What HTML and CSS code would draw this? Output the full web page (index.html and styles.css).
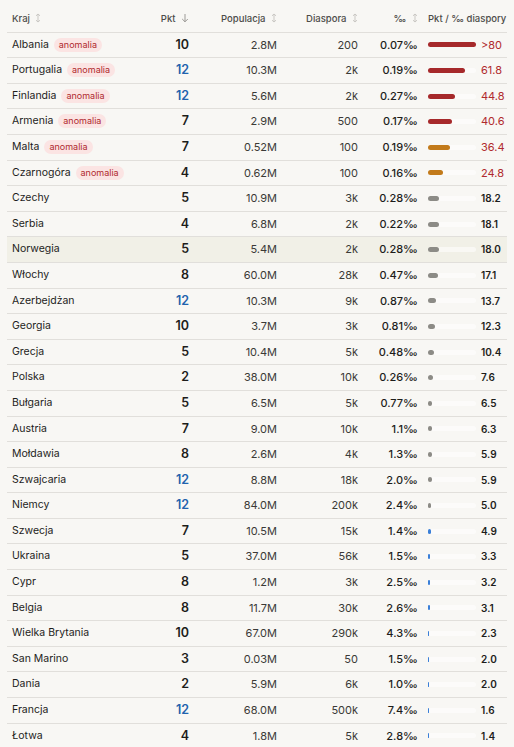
FILE: index.html
```html
<html lang="pl">
<head>
  <meta charset="UTF-8">
  <meta name="viewport" content="width=device-width, initial-scale=1.0">
  <title>Diaspora a punkty</title>
  <link rel="stylesheet" href="styles.css">
</head>
<body>
  <table class="stats">
    <colgroup>
      <col class="c-name">
      <col class="c-pkt">
      <col class="c-pop">
      <col class="c-dia">
      <col class="c-pm">
      <col class="c-ratio">
    </colgroup>
    <thead>
      <tr>
        <th class="left">Kraj <svg class="sort" viewBox="0 0 6 10"><path d="M3 1v8M1 2.8 3 1l2 1.8M1 7.2 3 9l2-1.8"/></svg></th>
        <th>Pkt <svg class="sort active" viewBox="0 0 8 10"><path d="M4 1v8M1.2 6 4 8.8 6.8 6"/></svg></th>
        <th>Populacja <svg class="sort" viewBox="0 0 6 10"><path d="M3 1v8M1 2.8 3 1l2 1.8M1 7.2 3 9l2-1.8"/></svg></th>
        <th>Diaspora <svg class="sort" viewBox="0 0 6 10"><path d="M3 1v8M1 2.8 3 1l2 1.8M1 7.2 3 9l2-1.8"/></svg></th>
        <th>‰ <svg class="sort" viewBox="0 0 6 10"><path d="M3 1v8M1 2.8 3 1l2 1.8M1 7.2 3 9l2-1.8"/></svg></th>
        <th class="left">Pkt / ‰ diaspory <svg class="sort" viewBox="0 0 6 10"><path d="M3 1v8M1 2.8 3 1l2 1.8M1 7.2 3 9l2-1.8"/></svg></th>
      </tr>
    </thead>
    <tbody id="rows"></tbody>
  </table>
  <script>
    // kraj, pkt, populacja, diaspora, promile, pkt/promile, kolor paska
    const data = [
      ['Albania', 10, '2.8M', '200', '0.07‰', 80, 'red', '>80'],
      ['Portugalia', 12, '10.3M', '2k', '0.19‰', 61.8, 'red'],
      ['Finlandia', 12, '5.6M', '2k', '0.27‰', 44.8, 'red'],
      ['Armenia', 7, '2.9M', '500', '0.17‰', 40.6, 'red'],
      ['Malta', 7, '0.52M', '100', '0.19‰', 36.4, 'orange'],
      ['Czarnogóra', 4, '0.62M', '100', '0.16‰', 24.8, 'orange'],
      ['Czechy', 5, '10.9M', '3k', '0.28‰', 18.2, 'grey'],
      ['Serbia', 4, '6.8M', '2k', '0.22‰', 18.1, 'grey'],
      ['Norwegia', 5, '5.4M', '2k', '0.28‰', 18.0, 'grey'],
      ['Włochy', 8, '60.0M', '28k', '0.47‰', 17.1, 'grey'],
      ['Azerbejdżan', 12, '10.3M', '9k', '0.87‰', 13.7, 'grey'],
      ['Georgia', 10, '3.7M', '3k', '0.81‰', 12.3, 'grey'],
      ['Grecja', 5, '10.4M', '5k', '0.48‰', 10.4, 'grey'],
      ['Polska', 2, '38.0M', '10k', '0.26‰', 7.6, 'grey'],
      ['Bułgaria', 5, '6.5M', '5k', '0.77‰', 6.5, 'grey'],
      ['Austria', 7, '9.0M', '10k', '1.1‰', 6.3, 'grey'],
      ['Mołdawia', 8, '2.6M', '4k', '1.3‰', 5.9, 'grey'],
      ['Szwajcaria', 12, '8.8M', '18k', '2.0‰', 5.9, 'grey'],
      ['Niemcy', 12, '84.0M', '200k', '2.4‰', 5.0, 'grey'],
      ['Szwecja', 7, '10.5M', '15k', '1.4‰', 4.9, 'blue'],
      ['Ukraina', 5, '37.0M', '56k', '1.5‰', 3.3, 'blue'],
      ['Cypr', 8, '1.2M', '3k', '2.5‰', 3.2, 'blue'],
      ['Belgia', 8, '11.7M', '30k', '2.6‰', 3.1, 'blue'],
      ['Wielka Brytania', 10, '67.0M', '290k', '4.3‰', 2.3, 'blue'],
      ['San Marino', 3, '0.03M', '50', '1.5‰', 2.0, 'blue'],
      ['Dania', 2, '5.9M', '6k', '1.0‰', 2.0, 'blue'],
      ['Francja', 12, '68.0M', '500k', '7.4‰', 1.6, 'blue'],
      ['Łotwa', 4, '1.8M', '5k', '2.8‰', 1.4, 'blue']
    ];

    const tbody = document.getElementById('rows');
    const maxRatio = 80;
    const trackWidth = 48;

    data.forEach(([name, pkt, pop, dia, pm, ratio, color, label]) => {
      const anomaly = color === 'red' || color === 'orange';
      const width = Math.min(ratio, maxRatio) / maxRatio * trackWidth;
      const tr = document.createElement('tr');
      if (name === 'Norwegia') tr.className = 'hover';
      tr.innerHTML =
        '<td class="name">' + name + (anomaly ? ' <span class="badge">anomalia</span>' : '') + '</td>' +
        '<td class="pkt' + (pkt === 12 ? ' top' : '') + '">' + pkt + '</td>' +
        '<td class="num">' + pop + '</td>' +
        '<td class="num">' + dia + '</td>' +
        '<td class="num pm">' + pm + '</td>' +
        '<td><div class="ratio">' +
          '<div class="track"><div class="bar ' + color + '" style="width:' + width.toFixed(2) + 'px"></div></div>' +
          '<span class="val' + (anomaly ? ' hi' : '') + '">' + (label || ratio.toFixed(1)) + '</span>' +
        '</div></td>';
      tbody.appendChild(tr);
    });
  </script>
</body>
</html>
```

FILE: styles.css
```css
body {
  margin: 7px;
  background-color: #f8f7f4;
  font-family: Inter, "Noto Sans", sans-serif;
  color: #1d1d1b;
  overflow: hidden;
}

.stats {
  border-collapse: collapse;
  table-layout: fixed;
  width: 521px;
}

.c-name { width: 133px; }
.c-pkt { width: 54px; }
.c-pop { width: 88px; }
.c-dia { width: 81px; }
.c-pm { width: 60px; }
.c-ratio { width: 105px; }

.stats th,
.stats td {
  height: 14.6px;
  padding: 5px;
  line-height: 14.6px;
  border-bottom: 1px solid #e1dfdb;
  white-space: nowrap;
}

.stats th {
  font-size: 9.5px;
  font-weight: 500;
  color: #4d4c49;
  text-align: right;
}

.stats th.left {
  text-align: left;
}

.sort {
  width: 6px;
  height: 10px;
  margin-left: 3px;
  vertical-align: -1px;
  fill: none;
  stroke: #c9c7c3;
  stroke-width: 1;
}

.sort.active {
  width: 8px;
  stroke: #9c9a96;
}

.name {
  font-size: 10.5px;
}

.badge {
  display: inline-block;
  margin-left: 2px;
  padding: 0 5px;
  height: 14px;
  line-height: 14px;
  font-size: 9px;
  color: #b02a2e;
  background-color: #fbe4e3;
  border-radius: 7px;
  vertical-align: top;
}

.pkt {
  text-align: right;
  font-size: 12.5px;
  font-weight: 600;
}

.pkt.top {
  color: #2262ad;
}

.num {
  text-align: right;
  font-size: 11px;
  color: #3b3a37;
}

.num.pm {
  color: #1d1d1b;
  font-weight: 500;
}

.ratio {
  display: flex;
  align-items: center;
  gap: 5px;
  height: 14.6px;
}

.track {
  width: 48px;
  height: 5px;
  border-radius: 3px;
  background-color: rgba(255, 255, 255, 0.55);
}

.bar {
  height: 100%;
  border-radius: 3px;
}

.bar.red { background-color: #a6292b; }
.bar.orange { background-color: #c27a1a; }
.bar.grey { background-color: #8c8b86; }
.bar.blue { background-color: #3a7fd8; }

.val {
  font-size: 10px;
  font-weight: 600;
  color: #1d1d1b;
}

.val.hi {
  font-size: 11px;
  font-weight: 400;
  color: #b02a2e;
}

.stats tr.hover td {
  background-color: #f1f0e7;
}
```
